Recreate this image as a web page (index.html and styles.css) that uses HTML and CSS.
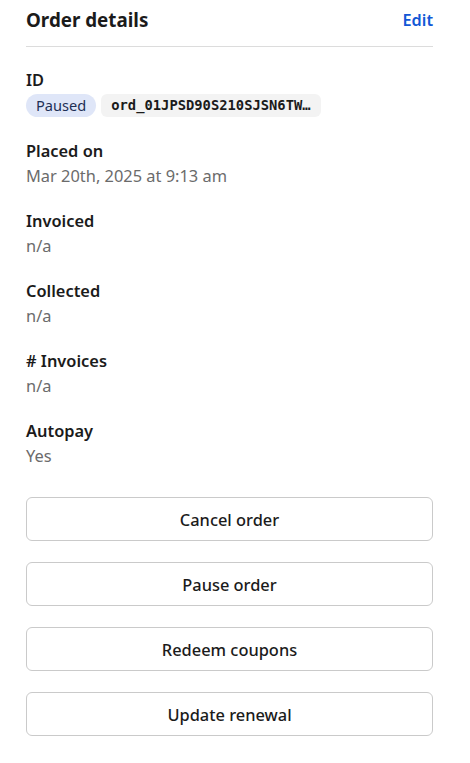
FILE: index.html
```html
<!DOCTYPE html>
<html lang="en">
<head>
<meta charset="utf-8">
<title>Order details</title>
<link rel="stylesheet" href="styles.css">
</head>
<body>
<div class="panel">
  <div class="header">
    <h2 class="title">Order details</h2>
    <a class="edit" href="#">Edit</a>
  </div>
  <div class="fields">
    <div class="field">
      <div class="label">ID</div>
      <div class="chips">
        <span class="badge">Paused</span>
        <span class="code">ord_01JPSD90S210SJSN6TW…</span>
      </div>
    </div>
    <div class="field">
      <div class="label">Placed on</div>
      <div class="value">Mar 20th, 2025 at 9:13 am</div>
    </div>
    <div class="field">
      <div class="label">Invoiced</div>
      <div class="value">n/a</div>
    </div>
    <div class="field">
      <div class="label">Collected</div>
      <div class="value">n/a</div>
    </div>
    <div class="field">
      <div class="label"># Invoices</div>
      <div class="value">n/a</div>
    </div>
    <div class="field">
      <div class="label">Autopay</div>
      <div class="value">Yes</div>
    </div>
  </div>
  <div class="actions">
    <button class="btn">Cancel order</button>
    <button class="btn">Pause order</button>
    <button class="btn">Redeem coupons</button>
    <button class="btn">Update renewal</button>
  </div>
</div>
</body>
</html>
```
FILE: styles.css
```css
* { box-sizing: border-box; }
html, body { margin: 0; padding: 0; background: #fff; }
body {
  font-family: "Noto Sans", "Open Sans", sans-serif;
  color: #1b1b1b;
}
.panel {
  width: 407px;
  margin-left: 26px;
}
.header {
  display: flex;
  justify-content: space-between;
  align-items: center;
  height: 47px;
  padding-bottom: 7px;
  border-bottom: 1px solid #dcdcdc;
}
.title {
  margin: 0;
  font-size: 18.8px;
  font-weight: 700;
  line-height: 24px;
}
.edit {
  font-size: 16.3px;
  font-weight: 600;
  color: #1257d6;
  text-decoration: none;
  line-height: 24px;
}
.fields {
  display: flex;
  flex-direction: column;
  gap: 20px;
  padding-top: 20px;
}
.label {
  font-size: 16.4px;
  font-weight: 600;
  line-height: 25px;
}
.value {
  font-size: 16.4px;
  line-height: 25px;
  color: #6b6b6b;
}
.chips {
  display: flex;
  gap: 5px;
  align-items: center;
  height: 26px;
}
.badge {
  background: #dfe6f8;
  color: #1e2f55;
  font-size: 14.6px;
  line-height: 23px;
  height: 23px;
  padding: 0 10px;
  border-radius: 12px;
}
.code {
  background: #f3f3f3;
  font-family: "DejaVu Sans Mono", "Liberation Mono", monospace;
  font-weight: 700;
  font-size: 13.8px;
  line-height: 23px;
  height: 23px;
  padding: 0 10px;
  border-radius: 6px;
  color: #1b1b1b;
}
.actions {
  display: flex;
  flex-direction: column;
  gap: 21px;
  margin-top: 29px;
}
.btn {
  height: 44px;
  width: 100%;
  background: #fff;
  border: 1px solid #cacaca;
  border-radius: 6px;
  font-family: inherit;
  font-size: 16.4px;
  font-weight: 500;
  color: #1b1b1b;
  cursor: pointer;
}
```
